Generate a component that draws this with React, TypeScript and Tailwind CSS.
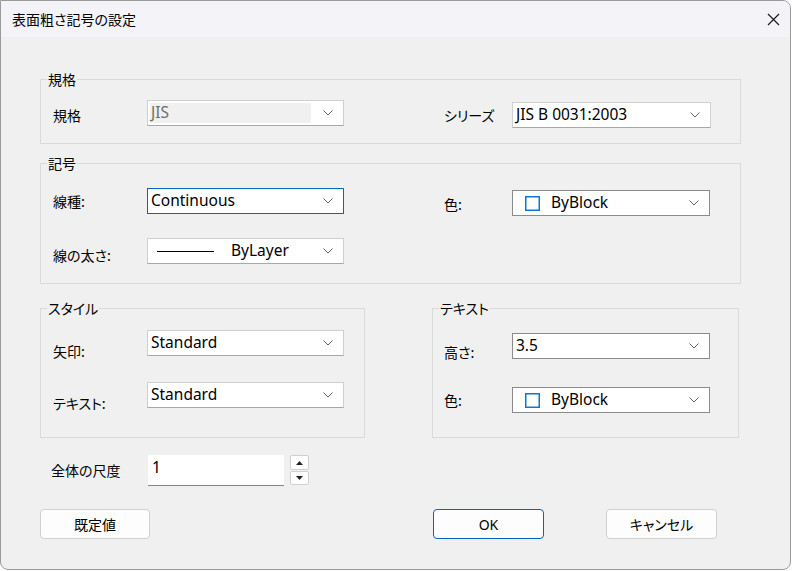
import type { ReactNode } from "react";

const latin = "font-['Noto_Sans','Noto_Sans_CJK_JP',sans-serif]";
const cjk = "font-['Noto_Sans_CJK_JP',sans-serif] [font-feature-settings:'palt']";

function Chevron() {
  return (
    <svg width="10" height="6" viewBox="0 0 10 6" className="shrink-0">
      <path d="M0.5 0.5 L5 5 L9.5 0.5" fill="none" stroke="#606060" strokeWidth="1" />
    </svg>
  );
}

function Combo({
  children,
  width = "w-[197px]",
  tone = "light",
  disabled = false,
}: {
  children: ReactNode;
  width?: string;
  tone?: "light" | "dark" | "focus";
  disabled?: boolean;
}) {
  const border =
    tone === "focus"
      ? "border-[#0067c0]"
      : tone === "dark"
        ? "border-[#8b8b8b]"
        : "border-[#cfcfcf] border-b-[#a8a8a8]";
  return (
    <div className={`${width} flex h-[26px] shrink-0 items-center border bg-white pr-[10px] ${border}`}>
      <div
        className={`flex flex-1 items-center ${latin} text-[15.5px] ${disabled ? "mx-[2px] mr-[12px] h-[20px] bg-[#f0f0f0] pl-[1px] text-[#6e6e6e]" : "h-full pl-[3px] text-black"}`}
      >
        {children}
      </div>
      <Chevron />
    </div>
  );
}

function Swatch() {
  return (
    <svg width="15" height="15" viewBox="0 0 15 15" className="ml-[9px] mr-[11px] shrink-0">
      <rect x="0.75" y="0.75" width="13.5" height="13.5" fill="none" stroke="#0a78d4" strokeWidth="1.5" />
    </svg>
  );
}

function Label({ children, width, offset = "" }: { children: ReactNode; width: string; offset?: string }) {
  return <div className={`${width} shrink-0 ${cjk} text-[14px] leading-[20px] text-black ${offset}`}>{children}</div>;
}

// each control row is exactly as tall as a combo; labels sit a little lower and may hang below
function Row({ children, className = "" }: { children: ReactNode; className?: string }) {
  return <div className={`flex h-[26px] items-start ${className}`}>{children}</div>;
}

function Group({ title, children, className = "" }: { title: string; children: ReactNode; className?: string }) {
  return (
    <fieldset className={`border border-[#dadada] ${className}`}>
      <legend className={`ml-[6px] px-[1px] ${cjk} text-[14px] leading-[20px] text-black`}>{title}</legend>
      {children}
    </fieldset>
  );
}

function Button({ children, primary = false, width }: { children: ReactNode; primary?: boolean; width: string }) {
  return (
    <div
      className={`${width} flex h-[30px] items-center justify-center rounded-[4px] border bg-[#fdfdfd] ${cjk} text-[14px] text-black ${primary ? "border-[#0067c0]" : "border-[#d0d0d0]"}`}
    >
      {children}
    </div>
  );
}

export default function App() {
  return (
    <div className="h-[571px] w-[796px] overflow-hidden bg-white">
      <div className="flex h-[570px] w-[791px] flex-col overflow-hidden rounded-tr-[8px] rounded-b-[8px] border border-[#9a9a9a] bg-[#f0f0f0]">
        {/* title bar */}
        <div className="flex h-[36px] shrink-0 items-center justify-between bg-[#f3f3f8] pl-[11px] pr-[10px]">
          <div className={`${cjk} text-[14px] text-black`}>表面粗さ記号の設定</div>
          <svg width="13" height="13" viewBox="0 0 13 13">
            <path d="M1 1 L12 12 M12 1 L1 12" stroke="#1a1a1a" strokeWidth="1.2" />
          </svg>
        </div>

        <div className="flex flex-col pl-[39px] pt-[32px]">
          <Group title="規格" className="w-[701px] pb-[17px]">
            <Row className="mt-[11px] pl-[12px]">
              <Label width="w-[94px]" offset="mt-[5px]">規格</Label>
              <Combo disabled>JIS</Combo>
              <Label width="ml-[100px] w-[68px]" offset="mt-[5px]">シリーズ</Label>
              <div className="mt-[2px]">
                <Combo width="w-[199px]">JIS B 0031:2003</Combo>
              </div>
            </Row>
          </Group>

          <Group title="記号" className="mt-[9px] w-[701px] pb-[19px]">
            <Row className="mt-[15px] pl-[12px]">
              <Label width="w-[94px]" offset="mt-[3px]">線種:</Label>
              <Combo tone="focus">Continuous</Combo>
              <Label width="ml-[100px] w-[68px]" offset="mt-[6px]">色:</Label>
              <div className="mt-[2px]">
                <Combo width="w-[198px]" tone="dark">
                  <Swatch />
                  ByBlock
                </Combo>
              </div>
            </Row>
            <Row className="mt-[24px] pl-[12px]">
              <Label width="w-[94px]" offset="mt-[7px]">線の太さ:</Label>
              <Combo>
                <span className="ml-[6px] mr-[17px] inline-block h-px w-[57px] bg-black" />
                ByLayer
              </Combo>
            </Row>
          </Group>

          <div className="mt-[14px] flex items-start">
            <Group title="スタイル" className="h-[140px] w-[325px]">
              <Row className="mt-[12px] pl-[12px]">
                <Label width="w-[94px]" offset="mt-[11px]">矢印:</Label>
                <Combo>Standard</Combo>
              </Row>
              <Row className="mt-[26px] pl-[12px]">
                <Label width="w-[94px]" offset="mt-[11px]">テキスト:</Label>
                <Combo>Standard</Combo>
              </Row>
            </Group>
            <Group title="テキスト" className="ml-[67px] h-[140px] w-[307px]">
              <Row className="mt-[15px] pl-[11px]">
                <Label width="w-[68px]" offset="mt-[9px]">高さ:</Label>
                <Combo width="w-[198px]" tone="dark">3.5</Combo>
              </Row>
              <Row className="mt-[28px] pl-[11px]">
                <Label width="w-[68px]" offset="mt-[3px]">色:</Label>
                <Combo width="w-[198px]" tone="dark">
                  <Swatch />
                  ByBlock
                </Combo>
              </Row>
            </Group>
          </div>

          <div className="mt-[17px] flex h-[31px] items-start">
            <Label width="ml-[11px] w-[97px]" offset="mt-[5px]">全体の尺度</Label>
            <div className={`h-[31px] w-[136px] border-b border-[#858585] bg-white pl-[4px] pt-[1px] ${latin} text-[15.5px] text-black`}>
              1
            </div>
            <div className="ml-[6px] flex flex-col gap-[1px]">
              <div className="flex h-[15px] w-[19px] items-center justify-center rounded-[2px] border border-[#d0d0d0] bg-[#fdfdfd]">
                <svg width="7" height="4" viewBox="0 0 7 4">
                  <path d="M0 4 L3.5 0 L7 4 Z" fill="#222" />
                </svg>
              </div>
              <div className="flex h-[14px] w-[19px] items-center justify-center rounded-[2px] border border-[#d0d0d0] bg-[#fdfdfd]">
                <svg width="7" height="4" viewBox="0 0 7 4">
                  <path d="M0 0 L3.5 4 L7 0 Z" fill="#222" />
                </svg>
              </div>
            </div>
          </div>

          <div className="mt-[23px] flex items-start">
            <Button width="w-[110px]">既定値</Button>
            <div className="ml-[283px]">
              <Button width="w-[111px]" primary>
                <span className={latin}>OK</span>
              </Button>
            </div>
            <div className="ml-[62px]">
              <Button width="w-[111px]">キャンセル</Button>
            </div>
          </div>
        </div>
      </div>
    </div>
  );
}
